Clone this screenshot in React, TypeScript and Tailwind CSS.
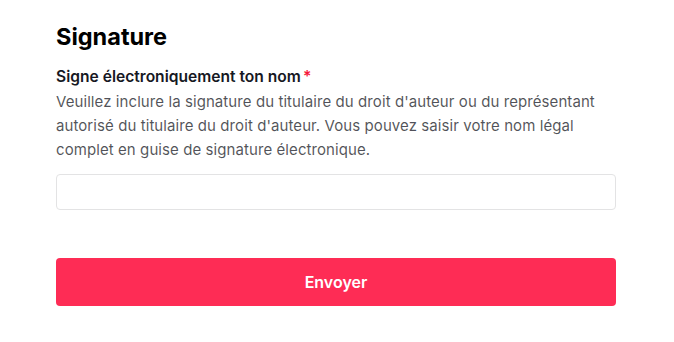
export default function App() {
  return (
    <div className="min-h-screen bg-white font-['Inter',sans-serif]">
      <div className="w-[560px] ml-[56px] pt-[22px]">
        <h2 className="text-[23.5px] leading-[30px] font-bold text-[#000000]">Signature</h2>
        <div className="mt-[14px]">
          <label className="flex items-center text-[15.6px] leading-[22px] font-semibold text-[#161823]">
            Signe électroniquement ton nom
            <span className="ml-[2px] text-[#f5183a]">*</span>
          </label>
          <p className="mt-[2px] text-[15px] tracking-[0.08px] leading-[24px] text-[#161823]/75">
            Veuillez inclure la signature du titulaire du droit d'auteur ou du représentant autorisé du titulaire du droit d'auteur. Vous pouvez saisir votre nom légal complet en guise de signature électronique.
          </p>
          <input
            type="text"
            className="mt-[12px] block w-full h-[36px] rounded-[4px] border border-[#e3e3e4] px-3 text-[15px] outline-none"
          />
        </div>
        <button className="mt-[48px] w-full h-[48px] rounded-[4px] bg-[#fe2c55] text-white text-[16px] font-semibold">
          Envoyer
        </button>
      </div>
    </div>
  );
}
